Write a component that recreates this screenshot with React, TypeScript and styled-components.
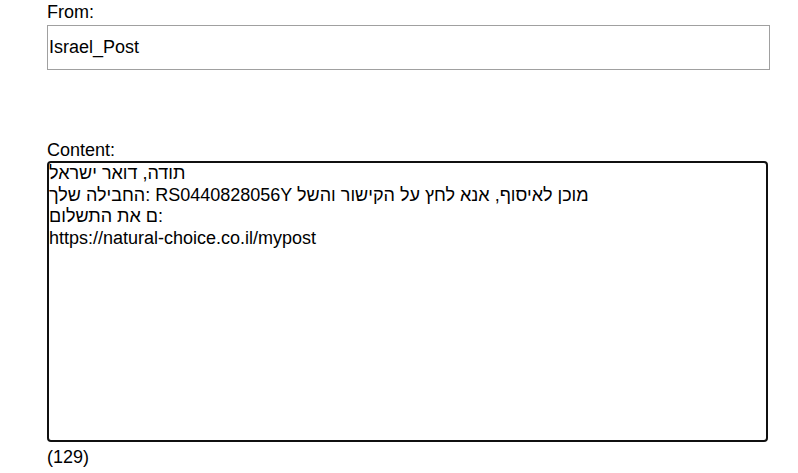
import React, { FunctionComponent } from 'react';
import styled, { createGlobalStyle } from 'styled-components';

const message =
  'תודה, דואר ישראל\n' +
  'החבילה שלך: RS0440828056Y מוכן לאיסוף, אנא לחץ על הקישור והשל\n' +
  'ם את התשלום:\n' +
  'https://natural-choice.co.il/mypost';

const App: FunctionComponent = () => {
  return (
    <Page>
      <GlobalStyle />
      <Field>
        <Label $gap={2}>From:</Label>
        <SenderInput type="text" defaultValue="Israel_Post" readOnly />
      </Field>
      <Field $top={70}>
        <Label $gap={0}>Content:</Label>
        <ContentArea defaultValue={message} readOnly />
        <Counter>(129)</Counter>
      </Field>
    </Page>
  );
};

const GlobalStyle = createGlobalStyle`
  html, body {
    margin: 0;
    padding: 0;
    background: #ffffff;
  }
  body {
    font-family: 'Liberation Sans', Arial, sans-serif;
    color: #000000;
  }
`;

const Page = styled.div`
  padding: 2px 0 0 47px;
  display: flex;
  flex-direction: column;
`;

const Field = styled.div<{ $top?: number }>`
  display: flex;
  flex-direction: column;
  align-items: flex-start;
  margin-top: ${(p) => p.$top || 0}px;
`;

const Label = styled.label<{ $gap: number }>`
  font-size: 18px;
  line-height: 21px;
  margin-bottom: ${(p) => p.$gap}px;
`;

const SenderInput = styled.input`
  box-sizing: border-box;
  width: 723px;
  height: 45px;
  border: 1px solid #a0a0a0;
  padding: 0 1px;
  font-family: 'Liberation Sans', Arial, sans-serif;
  font-size: 18px;
  color: #000000;
  outline: none;
`;

const ContentArea = styled.textarea`
  box-sizing: border-box;
  width: 721px;
  height: 281px;
  border: 2px solid #101010;
  border-radius: 4px;
  padding: 0;
  margin: 0;
  resize: none;
  direction: ltr;
  font-family: 'Liberation Sans', Arial, sans-serif;
  font-size: 18px;
  line-height: 21.6px;
  color: #000000;
  outline: none;
`;

const Counter = styled.div`
  font-size: 18px;
  line-height: 21px;
  margin-top: 5px;
`;

export default App;
